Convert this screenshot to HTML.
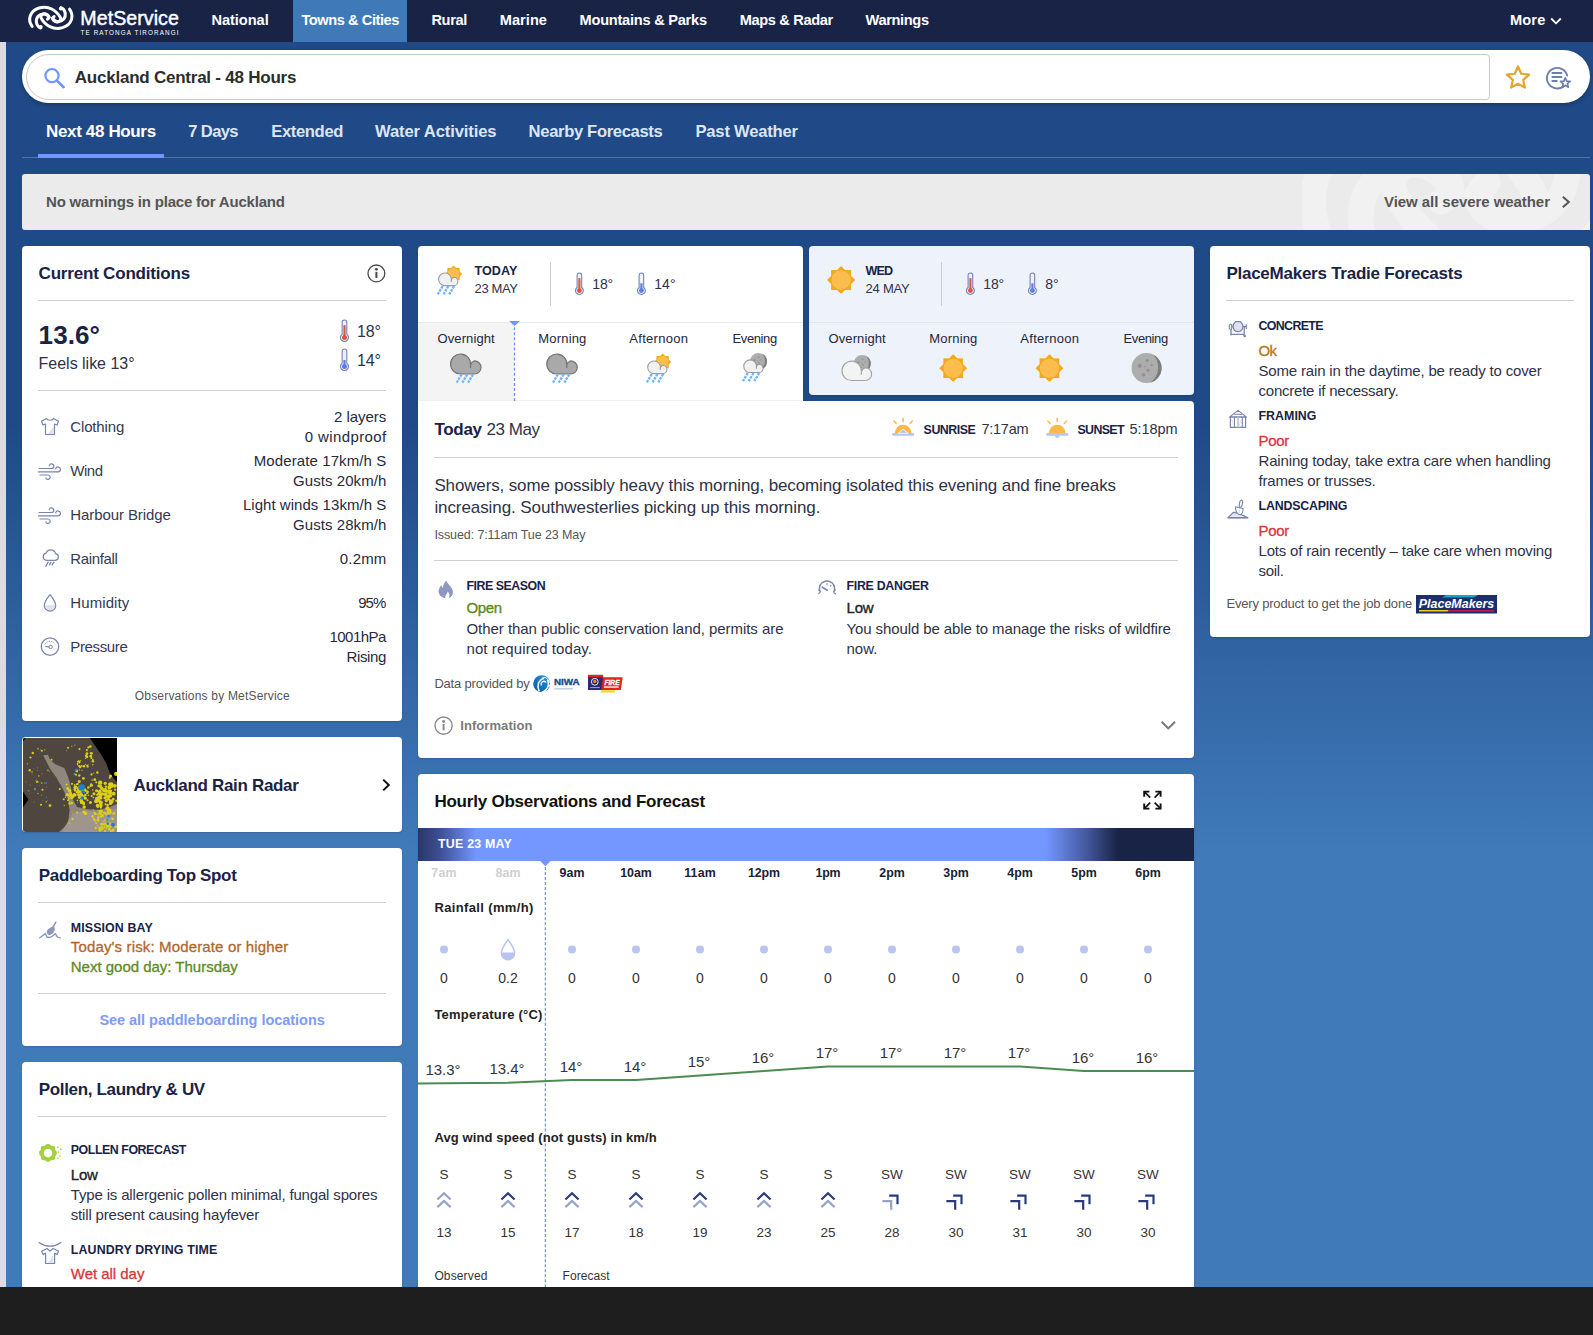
<!DOCTYPE html>
<html lang="en"><head><meta charset="utf-8"><title>MetService - Auckland Central 48 Hours</title>
<style>
html,body{margin:0;padding:0}
body{width:1593px;height:1335px;overflow:hidden;position:relative;background:#1e1e1e;font-family:"Liberation Sans",sans-serif;line-height:1}
#pg{position:absolute;left:0;top:0;width:1593px;height:1335px;overflow:hidden}
#pg>div,#pg>svg,#pg>span{position:absolute;display:block}
#pg>span{white-space:pre}
</style></head>
<body>
<div id="pg">
<div style="left:0px;top:42px;width:6px;height:1245px;background:#d9dce4;"></div>
<div style="left:6px;top:42px;width:1587px;height:1245px;background:linear-gradient(180deg,#1f4a87 0px,#1f4a87 383px,#407ab9 808px,#407ab9 1245px);"></div>
<div style="left:0px;top:0px;width:1593px;height:42px;background:#182346;"></div>
<div style="left:0px;top:1287px;width:1593px;height:48px;background:#1e1e1e;"></div>
<div style="left:293px;top:0px;width:114px;height:42px;background:#4079b8;"></div>
<div style="left:22px;top:49.8px;width:1568px;height:53.7px;background:#fff;border-radius:27px;box-shadow:0 2px 4px rgba(0,0,0,.25)"></div>
<div style="left:26px;top:54px;width:1463px;height:45px;background:#fff;border:1px solid #c9c9c9;border-radius:23px 4px 4px 23px;box-sizing:content-box;width:1462px;height:44px"></div>
<div style="left:22px;top:157px;width:1568px;height:1px;background:rgba(255,255,255,.22);"></div>
<div style="left:38px;top:154px;width:126px;height:4px;background:#7396ff;"></div>
<div style="left:22px;top:174px;width:1568px;height:56px;background:#ebebeb;border-radius:3px;overflow:hidden"></div>
<div style="left:22px;top:246px;width:380px;height:475px;background:#fff;border-radius:4px;box-shadow:0 1px 2px rgba(10,20,60,.18);"></div>
<div style="left:22px;top:737px;width:380px;height:95px;background:#fff;border-radius:4px;box-shadow:0 1px 2px rgba(10,20,60,.18);"></div>
<div style="left:22px;top:848px;width:380px;height:198px;background:#fff;border-radius:4px;box-shadow:0 1px 2px rgba(10,20,60,.18);"></div>
<div style="left:22px;top:1062px;width:380px;height:240px;background:#fff;border-radius:4px;box-shadow:0 1px 2px rgba(10,20,60,.18);"></div>
<div style="left:1210px;top:246px;width:380px;height:391px;background:#fff;border-radius:4px;box-shadow:0 1px 2px rgba(10,20,60,.18);"></div>
<div style="left:418px;top:246px;width:385px;height:160px;background:#fff;border-radius:4px;box-shadow:0 1px 2px rgba(10,20,60,.18);border-radius:4px 4px 0 0"></div>
<div style="left:809px;top:246px;width:385px;height:148.7px;background:#eef2fb;border-radius:4px;box-shadow:0 1px 2px rgba(10,20,60,.18)"></div>
<div style="left:418px;top:401px;width:776px;height:356.7px;background:#fff;border-radius:4px;box-shadow:0 1px 2px rgba(10,20,60,.18);border-radius:0 4px 4px 4px"></div>
<div style="left:418px;top:774px;width:776px;height:530px;background:#fff;border-radius:4px;box-shadow:0 1px 2px rgba(10,20,60,.18);"></div>
<div style="left:38px;top:300px;width:348px;height:1px;background:#cfcfcf;"></div>
<div style="left:38px;top:390px;width:348px;height:1px;background:#cfcfcf;"></div>
<div style="left:38px;top:902px;width:348px;height:1px;background:#cfcfcf;"></div>
<div style="left:38px;top:993px;width:348px;height:1px;background:#cfcfcf;"></div>
<div style="left:38px;top:1116px;width:348px;height:1px;background:#cfcfcf;"></div>
<div style="left:1226px;top:300px;width:348px;height:1px;background:#cfcfcf;"></div>
<div style="left:418px;top:322px;width:96px;height:79px;background:#f4f4f4;"></div>
<div style="left:418px;top:322px;width:385px;height:1px;background:#e9e9e9;"></div>
<div style="left:809px;top:322px;width:385px;height:1px;background:#dfe4ef;"></div>
<div style="left:418px;top:400px;width:385px;height:1px;background:#eeeeee;"></div>
<div style="left:550px;top:262px;width:1px;height:44px;background:#cfcfcf;"></div>
<div style="left:941px;top:262px;width:1px;height:44px;background:#cfcfcf;"></div>
<div style="left:434px;top:457px;width:744px;height:1px;background:#cfcfcf;"></div>
<div style="left:434px;top:560px;width:744px;height:1px;background:#cfcfcf;"></div>
<div style="left:418px;top:828.3px;width:776px;height:32.5px;background:linear-gradient(90deg,#2a3668 0px,#3d4f94 22px,#7396ff 58px,#7396ff 628px,#4a5fa8 664px,#182346 700px,#182346 776px);"></div>
<svg style="left:24px;top:2px;" width="60" height="36" viewBox="0 0 1593 956"><path d="M215,650 C95,480 140,240 400,160 C650,85 860,220 965,410 C1000,480 930,545 850,525 C765,505 730,425 800,385" fill="none" stroke="#fff" stroke-width="80" stroke-linecap="round"/><path d="M440,690 C325,650 290,480 375,380 C450,295 610,290 665,410" fill="none" stroke="#fff" stroke-width="80" stroke-linecap="round"/><path d="M1209,190 C1329,360 1284,600 1024,680 C774,755 564,620 459,430 C424,360 494,295 574,315 C659,335 694,415 624,455" fill="none" stroke="#fff" stroke-width="80" stroke-linecap="round"/><path d="M984,150 C1099,190 1134,360 1049,460 C974,545 814,550 759,430" fill="none" stroke="#fff" stroke-width="80" stroke-linecap="round"/><circle cx="445" cy="665" r="52" fill="#fff"/><circle cx="979" cy="175" r="52" fill="#fff"/></svg>
<svg style="left:1549px;top:16px;" width="14" height="10" viewBox="0 0 14 10"><path d="M2.2,2.5 L7,7.3 L11.8,2.5" fill="none" stroke="#fff" stroke-width="1.8"/></svg>
<svg style="left:42px;top:66px;" width="24" height="23" viewBox="0 0 24 23"><circle cx="10" cy="9.6" r="6.6" fill="none" stroke="#7094ff" stroke-width="2.2"/><path d="M14.8,14.6 L21.6,21.2" stroke="#7094ff" stroke-width="2.6" stroke-linecap="round"/></svg>
<svg style="left:1503px;top:62px;" width="30" height="30" viewBox="0 0 30 30"><polygon points="15.00,4.50 18.23,11.75 26.13,12.58 20.23,17.90 21.88,25.67 15.00,21.70 8.12,25.67 9.77,17.90 3.87,12.58 11.77,11.75" fill="none" stroke="#e5a52a" stroke-width="2.2" stroke-linejoin="round"/></svg>
<svg style="left:1544px;top:64px;" width="30" height="26" viewBox="0 0 30 26"><path d="M20.5,21.5 A10.3,10.3 0 1 1 23.2,11.5" fill="none" stroke="#6d7fae" stroke-width="1.9" stroke-linecap="round"/><path d="M7.6,9 H18.2 M7.6,13 H18.2 M7.6,17 H13.5" stroke="#6d7fae" stroke-width="2"/><polygon points="21.30,13.80 22.65,17.14 26.25,17.39 23.49,19.71 24.36,23.21 21.30,21.30 18.24,23.21 19.11,19.71 16.35,17.39 19.95,17.14" fill="#fff" stroke="#6d7fae" stroke-width="1.6" stroke-linejoin="round"/></svg>
<svg style="left:1302px;top:174px;" width="288" height="56" viewBox="0 0 288 56"><g transform="translate(-30,-95) scale(0.27)"><path d="M215,650 C95,480 140,240 400,160 C650,85 860,220 965,410 C1000,480 930,545 850,525 C765,505 730,425 800,385" fill="none" stroke="#f1f1f1" stroke-width="95" stroke-linecap="round"/><path d="M440,690 C325,650 290,480 375,380 C450,295 610,290 665,410" fill="none" stroke="#f1f1f1" stroke-width="95" stroke-linecap="round"/><path d="M1209,190 C1329,360 1284,600 1024,680 C774,755 564,620 459,430 C424,360 494,295 574,315 C659,335 694,415 624,455" fill="none" stroke="#f1f1f1" stroke-width="95" stroke-linecap="round"/><path d="M984,150 C1099,190 1134,360 1049,460 C974,545 814,550 759,430" fill="none" stroke="#f1f1f1" stroke-width="95" stroke-linecap="round"/><circle cx="445" cy="665" r="52" fill="#f1f1f1"/><circle cx="979" cy="175" r="52" fill="#f1f1f1"/></g></svg>
<svg style="left:1560px;top:195px;" width="12" height="14" viewBox="0 0 12 14"><path d="M2.8,1.8 L8.8,7 L2.8,12.2" fill="none" stroke="#555" stroke-width="2"/></svg>
<svg style="left:338.5px;top:319px;" width="11" height="24" viewBox="0 0 11 24"><g transform="translate(1,1)"><path d="M2.16,2.34 A2.34,2.34 0 0 1 6.84,2.34 V14.26 A4.0,4.0 0 1 1 2.16,14.26 Z" fill="#eef0fa" stroke="#7482b6" stroke-width="1.1"/><path d="M4.5,5.175000000000001 V17.5" stroke="#e0533d" stroke-width="2.15" stroke-linecap="butt"/><circle cx="4.5" cy="17.5" r="2.52" fill="#e0533d"/></g></svg>
<svg style="left:338.5px;top:348px;" width="11" height="24" viewBox="0 0 11 24"><g transform="translate(1,1)"><path d="M2.16,2.34 A2.34,2.34 0 0 1 6.84,2.34 V14.26 A4.0,4.0 0 1 1 2.16,14.26 Z" fill="#eef0fa" stroke="#7482b6" stroke-width="1.1"/><path d="M4.5,10.975 V17.5" stroke="#5b7be8" stroke-width="2.15" stroke-linecap="butt"/><circle cx="4.5" cy="17.5" r="2.52" fill="#5b7be8"/></g></svg>
<svg style="left:573.6px;top:271.7px;" width="10.8" height="24" viewBox="0 0 10.8 24"><g transform="translate(1,1)"><path d="M2.112,2.2880000000000003 A2.2880000000000003,2.2880000000000003 0 0 1 6.688000000000001,2.2880000000000003 V14.432000000000002 A3.9000000000000004,3.9000000000000004 0 1 1 2.112,14.432000000000002 Z" fill="#eef0fa" stroke="#7482b6" stroke-width="1.1"/><path d="M4.4,5.190000000000001 V17.6" stroke="#e0533d" stroke-width="2.10" stroke-linecap="butt"/><circle cx="4.4" cy="17.6" r="2.46" fill="#e0533d"/></g></svg>
<svg style="left:635.6px;top:271.7px;" width="10.8" height="24" viewBox="0 0 10.8 24"><g transform="translate(1,1)"><path d="M2.112,2.2880000000000003 A2.2880000000000003,2.2880000000000003 0 0 1 6.688000000000001,2.2880000000000003 V14.432000000000002 A3.9000000000000004,3.9000000000000004 0 1 1 2.112,14.432000000000002 Z" fill="#eef0fa" stroke="#7482b6" stroke-width="1.1"/><path d="M4.4,10.3 V17.6" stroke="#5b7be8" stroke-width="2.10" stroke-linecap="butt"/><circle cx="4.4" cy="17.6" r="2.46" fill="#5b7be8"/></g></svg>
<svg style="left:964.6px;top:271.7px;" width="10.8" height="24" viewBox="0 0 10.8 24"><g transform="translate(1,1)"><path d="M2.112,2.2880000000000003 A2.2880000000000003,2.2880000000000003 0 0 1 6.688000000000001,2.2880000000000003 V14.432000000000002 A3.9000000000000004,3.9000000000000004 0 1 1 2.112,14.432000000000002 Z" fill="#eef0fa" stroke="#7482b6" stroke-width="1.1"/><path d="M4.4,5.190000000000001 V17.6" stroke="#e0533d" stroke-width="2.10" stroke-linecap="butt"/><circle cx="4.4" cy="17.6" r="2.46" fill="#e0533d"/></g></svg>
<svg style="left:1026.6px;top:271.7px;" width="10.8" height="24" viewBox="0 0 10.8 24"><g transform="translate(1,1)"><path d="M2.112,2.2880000000000003 A2.2880000000000003,2.2880000000000003 0 0 1 6.688000000000001,2.2880000000000003 V14.432000000000002 A3.9000000000000004,3.9000000000000004 0 1 1 2.112,14.432000000000002 Z" fill="#eef0fa" stroke="#7482b6" stroke-width="1.1"/><path d="M4.4,10.3 V17.6" stroke="#5b7be8" stroke-width="2.10" stroke-linecap="butt"/><circle cx="4.4" cy="17.6" r="2.46" fill="#5b7be8"/></g></svg>
<svg style="left:365.6px;top:262.8px;" width="20.8" height="20.8" viewBox="0 0 20.8 20.8"><circle cx="10.4" cy="10.4" r="8.4" fill="none" stroke="#4a4a4a" stroke-width="1.3"/><circle cx="10.4" cy="6.368" r="1.44" fill="#4a4a4a"/><path d="M10.4,8.888 V15.020000000000001" stroke="#4a4a4a" stroke-width="1.98"/></svg>
<svg style="left:433.2px;top:714.6px;" width="21.2" height="21.2" viewBox="0 0 21.2 21.2"><circle cx="10.6" cy="10.6" r="8.6" fill="none" stroke="#8a8a8a" stroke-width="1.4"/><circle cx="10.6" cy="6.4719999999999995" r="1.47" fill="#8a8a8a"/><path d="M10.6,9.052 V15.33" stroke="#8a8a8a" stroke-width="2.02"/></svg>
<svg style="left:40px;top:417px;" width="20" height="19" viewBox="0 0 20 19"><path d="M6.5,1.5 L1.5,4.2 L3,8 L5.5,7 V17.5 H14.5 V7 L17,8 L18.5,4.2 L13.5,1.5 C12.5,3.8 7.5,3.8 6.5,1.5 Z" fill="#fff" stroke="#7a84ad" stroke-width="1.2" stroke-linejoin="round"/><path d="M14,9 V17 H8 Z" fill="#dfe2ee"/></svg>
<svg style="left:38px;top:462.5px;" width="24" height="17" viewBox="0 0 24 17"><path d="M1,5.5 H13.5 A2.3,2.3 0 1 0 11.3,2.6" fill="none" stroke="#7a84ad" stroke-width="1.2" stroke-linecap="round"/><path d="M0.5,8.8 H20 A2.4,2.4 0 1 0 17.7,5.8" fill="none" stroke="#7a84ad" stroke-width="1.2" stroke-linecap="round"/><path d="M2,12 H10 A2.2,2.2 0 1 1 7.9,14.8" fill="none" stroke="#7a84ad" stroke-width="1.2" stroke-linecap="round"/></svg>
<svg style="left:38px;top:506.5px;" width="24" height="17" viewBox="0 0 24 17"><path d="M1,5.5 H13.5 A2.3,2.3 0 1 0 11.3,2.6" fill="none" stroke="#7a84ad" stroke-width="1.2" stroke-linecap="round"/><path d="M0.5,8.8 H20 A2.4,2.4 0 1 0 17.7,5.8" fill="none" stroke="#7a84ad" stroke-width="1.2" stroke-linecap="round"/><path d="M2,12 H10 A2.2,2.2 0 1 1 7.9,14.8" fill="none" stroke="#7a84ad" stroke-width="1.2" stroke-linecap="round"/></svg>
<svg style="left:41px;top:548px;" width="20" height="20" viewBox="0 0 20 20"><path d="M5.5,12.3 A3.6,3.6 0 0 1 5,5.2 A5,5 0 0 1 14.6,5.6 A3.4,3.4 0 0 1 14.5,12.3 Z" fill="#fff" stroke="#7a84ad" stroke-width="1.2"/><path d="M7.4,13.8 L4.6,18.8 M10.2,13.8 L8.2,17.4 M13,13.8 L11,17.4" stroke="#7a84ad" stroke-width="1.3"/></svg>
<svg style="left:42px;top:593px;" width="16" height="20" viewBox="0 0 16 20"><path d="M8,1.6 C8,1.6 2.3,8.6 2.3,12.4 A5.7,5.7 0 0 0 13.7,12.4 C13.7,8.6 8,1.6 8,1.6 Z" fill="#fff" stroke="#7a84ad" stroke-width="1.2"/><path d="M2.9,12.2 H13.1 A5.1,5.1 0 0 1 2.9,12.2 Z" fill="#dfe2ee"/></svg>
<svg style="left:39px;top:636px;" width="22" height="22" viewBox="0 0 22 22"><circle cx="11" cy="10.6" r="8.7" fill="#fff" stroke="#7a84ad" stroke-width="1.3"/><path d="M6,8.3 A5.6,5.6 0 0 1 16,8.3" fill="none" stroke="#7a84ad" stroke-width="1" stroke-dasharray="1.2 1.2"/><circle cx="11.6" cy="11" r="1.7" fill="none" stroke="#7a84ad" stroke-width="1"/><path d="M6.3,10.3 L10,11" stroke="#7a84ad" stroke-width="1.2"/></svg>
<svg style="left:23px;top:738px;border-radius:2px 0 0 3px" width="94" height="94" viewBox="40 40 1252 1252"><defs><filter id="rb" x="-5%" y="-5%" width="110%" height="110%"><feGaussianBlur stdDeviation="7"/></filter></defs><rect x="40" y="40" width="1252" height="1252" fill="#4f463f"/><path d="M930,40 H1292 V625 L1200,520 L1150,380 L1080,260 L1000,140 Z" fill="#000"/><path d="M40,755 L112,860 L40,965 Z" fill="#000"/><path d="M40,40 H80 L40,80 Z" fill="#000"/><g filter="url(#rb)"><path d="M310,270 L372,262 L400,330 L470,390 L590,440 L640,560 L680,700 L700,850 L760,960 L900,990 L1050,1000 L1200,960 L1292,920 V1292 H520 L640,1180 L660,1000 L640,860 L560,700 L480,560 L400,450 L350,350 Z" fill="#8f867e"/><path d="M700,1040 L900,1010 L1100,1030 L1292,980 V1292 H560 Z" fill="#a0958c"/><circle cx="690" cy="832" r="23" fill="#dccf16"/><circle cx="695" cy="818" r="18" fill="#dccf16"/><circle cx="843" cy="911" r="19" fill="#dccf16"/><circle cx="811" cy="743" r="14" fill="#dccf16"/><circle cx="938" cy="898" r="20" fill="#dccf16"/><circle cx="1047" cy="871" r="24" fill="#dccf16"/><circle cx="729" cy="665" r="12" fill="#dccf16"/><circle cx="910" cy="803" r="11" fill="#dccf16"/><circle cx="825" cy="866" r="10" fill="#dccf16"/><circle cx="705" cy="817" r="22" fill="#dccf16"/><circle cx="672" cy="771" r="17" fill="#dccf16"/><circle cx="748" cy="686" r="14" fill="#dccf16"/><circle cx="1097" cy="785" r="22" fill="#dccf16"/><circle cx="779" cy="698" r="13" fill="#dccf16"/><circle cx="792" cy="831" r="21" fill="#dccf16"/><circle cx="659" cy="915" r="15" fill="#dccf16"/><circle cx="968" cy="734" r="10" fill="#dccf16"/><circle cx="849" cy="1024" r="17" fill="#dccf16"/><circle cx="890" cy="776" r="11" fill="#dccf16"/><circle cx="693" cy="651" r="14" fill="#dccf16"/><circle cx="869" cy="841" r="23" fill="#dccf16"/><circle cx="802" cy="735" r="13" fill="#dccf16"/><circle cx="825" cy="813" r="21" fill="#dccf16"/><circle cx="851" cy="917" r="16" fill="#dccf16"/><circle cx="853" cy="956" r="12" fill="#dccf16"/><circle cx="772" cy="747" r="16" fill="#dccf16"/><circle cx="817" cy="875" r="24" fill="#dccf16"/><circle cx="825" cy="702" r="22" fill="#dccf16"/><circle cx="822" cy="897" r="22" fill="#dccf16"/><circle cx="774" cy="751" r="24" fill="#dccf16"/><circle cx="816" cy="873" r="21" fill="#dccf16"/><circle cx="764" cy="871" r="11" fill="#dccf16"/><circle cx="900" cy="868" r="13" fill="#dccf16"/><circle cx="730" cy="727" r="16" fill="#dccf16"/><circle cx="900" cy="758" r="18" fill="#dccf16"/><circle cx="838" cy="738" r="12" fill="#dccf16"/><circle cx="939" cy="680" r="13" fill="#dccf16"/><circle cx="855" cy="958" r="23" fill="#dccf16"/><circle cx="873" cy="1044" r="22" fill="#dccf16"/><circle cx="725" cy="720" r="11" fill="#dccf16"/><circle cx="1024" cy="858" r="13" fill="#dccf16"/><circle cx="780" cy="709" r="22" fill="#dccf16"/><circle cx="738" cy="738" r="12" fill="#dccf16"/><circle cx="794" cy="749" r="13" fill="#dccf16"/><circle cx="636" cy="712" r="19" fill="#dccf16"/><circle cx="762" cy="1031" r="13" fill="#dccf16"/><circle cx="871" cy="799" r="16" fill="#dccf16"/><circle cx="852" cy="815" r="15" fill="#dccf16"/><circle cx="757" cy="764" r="15" fill="#dccf16"/><circle cx="996" cy="595" r="19" fill="#dccf16"/><circle cx="757" cy="654" r="12" fill="#dccf16"/><circle cx="817" cy="795" r="23" fill="#dccf16"/><circle cx="730" cy="521" r="10" fill="#dccf16"/><circle cx="732" cy="695" r="20" fill="#dccf16"/><circle cx="655" cy="1173" r="11" fill="#dccf16"/><circle cx="659" cy="739" r="23" fill="#dccf16"/><circle cx="789" cy="619" r="21" fill="#dccf16"/><circle cx="872" cy="738" r="20" fill="#dccf16"/><circle cx="948" cy="660" r="16" fill="#dccf16"/><circle cx="845" cy="578" r="18" fill="#dccf16"/><circle cx="738" cy="714" r="18" fill="#dccf16"/><circle cx="771" cy="762" r="19" fill="#dccf16"/><circle cx="985" cy="781" r="20" fill="#dccf16"/><circle cx="688" cy="906" r="18" fill="#dccf16"/><circle cx="640" cy="867" r="11" fill="#dccf16"/><circle cx="800" cy="763" r="18" fill="#dccf16"/><circle cx="735" cy="799" r="20" fill="#dccf16"/><circle cx="676" cy="793" r="23" fill="#dccf16"/><circle cx="800" cy="807" r="14" fill="#dccf16"/><circle cx="774" cy="723" r="12" fill="#dccf16"/><circle cx="910" cy="700" r="16" fill="#dccf16"/><circle cx="862" cy="728" r="19" fill="#dccf16"/><circle cx="830" cy="901" r="21" fill="#dccf16"/><circle cx="959" cy="674" r="15" fill="#dccf16"/><circle cx="732" cy="742" r="12" fill="#dccf16"/><circle cx="629" cy="795" r="22" fill="#dccf16"/><circle cx="747" cy="529" r="14" fill="#dccf16"/><circle cx="848" cy="895" r="14" fill="#dccf16"/><circle cx="821" cy="901" r="19" fill="#dccf16"/><circle cx="722" cy="794" r="22" fill="#dccf16"/><circle cx="898" cy="776" r="11" fill="#dccf16"/><circle cx="979" cy="834" r="11" fill="#dccf16"/><circle cx="770" cy="652" r="14" fill="#dccf16"/><circle cx="805" cy="769" r="12" fill="#dccf16"/><circle cx="781" cy="797" r="22" fill="#dccf16"/><circle cx="1153" cy="860" r="13" fill="#dccf16"/><circle cx="1090" cy="713" r="23" fill="#dccf16"/><circle cx="1068" cy="635" r="29" fill="#dccf16"/><circle cx="1129" cy="733" r="21" fill="#dccf16"/><circle cx="1155" cy="815" r="20" fill="#dccf16"/><circle cx="1139" cy="733" r="17" fill="#dccf16"/><circle cx="1080" cy="940" r="21" fill="#dccf16"/><circle cx="1049" cy="678" r="19" fill="#dccf16"/><circle cx="1195" cy="569" r="14" fill="#dccf16"/><circle cx="1267" cy="728" r="14" fill="#dccf16"/><circle cx="1043" cy="844" r="28" fill="#dccf16"/><circle cx="1076" cy="900" r="28" fill="#dccf16"/><circle cx="1206" cy="547" r="20" fill="#dccf16"/><circle cx="1119" cy="739" r="25" fill="#dccf16"/><circle cx="1198" cy="657" r="25" fill="#dccf16"/><circle cx="1189" cy="1030" r="30" fill="#dccf16"/><circle cx="1248" cy="781" r="26" fill="#dccf16"/><circle cx="1075" cy="1018" r="27" fill="#dccf16"/><circle cx="1131" cy="837" r="20" fill="#dccf16"/><circle cx="1020" cy="742" r="21" fill="#dccf16"/><circle cx="1282" cy="877" r="15" fill="#dccf16"/><circle cx="1078" cy="967" r="15" fill="#dccf16"/><circle cx="1207" cy="907" r="25" fill="#dccf16"/><circle cx="1216" cy="658" r="29" fill="#dccf16"/><circle cx="955" cy="813" r="14" fill="#dccf16"/><circle cx="1167" cy="932" r="17" fill="#dccf16"/><circle cx="1135" cy="644" r="21" fill="#dccf16"/><circle cx="1207" cy="683" r="18" fill="#dccf16"/><circle cx="1037" cy="944" r="28" fill="#dccf16"/><circle cx="1190" cy="1007" r="29" fill="#dccf16"/><circle cx="1047" cy="778" r="16" fill="#dccf16"/><circle cx="1058" cy="771" r="23" fill="#dccf16"/><circle cx="1069" cy="789" r="26" fill="#dccf16"/><circle cx="1064" cy="751" r="24" fill="#dccf16"/><circle cx="1241" cy="855" r="19" fill="#dccf16"/><circle cx="1139" cy="924" r="14" fill="#dccf16"/><circle cx="1015" cy="882" r="28" fill="#dccf16"/><circle cx="1081" cy="814" r="15" fill="#dccf16"/><circle cx="1016" cy="631" r="14" fill="#dccf16"/><circle cx="1153" cy="777" r="15" fill="#dccf16"/><circle cx="1167" cy="966" r="18" fill="#dccf16"/><circle cx="1082" cy="921" r="14" fill="#dccf16"/><circle cx="1145" cy="744" r="21" fill="#dccf16"/><circle cx="1150" cy="873" r="22" fill="#dccf16"/><circle cx="1078" cy="841" r="19" fill="#dccf16"/><circle cx="1104" cy="788" r="16" fill="#dccf16"/><circle cx="1073" cy="685" r="22" fill="#dccf16"/><circle cx="1215" cy="678" r="27" fill="#dccf16"/><circle cx="1164" cy="980" r="27" fill="#dccf16"/><circle cx="1207" cy="745" r="18" fill="#dccf16"/><circle cx="1200" cy="764" r="30" fill="#dccf16"/><circle cx="1183" cy="762" r="16" fill="#dccf16"/><circle cx="1141" cy="716" r="14" fill="#dccf16"/><circle cx="1191" cy="700" r="26" fill="#dccf16"/><circle cx="1207" cy="879" r="24" fill="#dccf16"/><circle cx="1203" cy="808" r="24" fill="#dccf16"/><circle cx="1221" cy="887" r="26" fill="#dccf16"/><circle cx="1028" cy="797" r="15" fill="#dccf16"/><circle cx="1184" cy="822" r="13" fill="#dccf16"/><circle cx="1059" cy="758" r="22" fill="#dccf16"/><circle cx="1181" cy="856" r="16" fill="#dccf16"/><circle cx="1281" cy="517" r="29" fill="#dccf16"/><circle cx="1174" cy="822" r="29" fill="#dccf16"/><circle cx="1018" cy="844" r="18" fill="#dccf16"/><circle cx="1056" cy="827" r="20" fill="#dccf16"/><circle cx="1139" cy="789" r="25" fill="#dccf16"/><circle cx="1178" cy="742" r="20" fill="#dccf16"/><circle cx="1145" cy="688" r="16" fill="#dccf16"/><circle cx="1199" cy="914" r="12" fill="#dccf16"/><circle cx="1263" cy="677" r="25" fill="#dccf16"/><circle cx="1222" cy="681" r="19" fill="#dccf16"/><circle cx="892" cy="248" r="18" fill="#dccf16"/><circle cx="953" cy="245" r="17" fill="#dccf16"/><circle cx="937" cy="154" r="16" fill="#dccf16"/><circle cx="852" cy="417" r="17" fill="#dccf16"/><circle cx="911" cy="165" r="15" fill="#dccf16"/><circle cx="874" cy="390" r="8" fill="#dccf16"/><circle cx="909" cy="395" r="7" fill="#dccf16"/><circle cx="896" cy="411" r="14" fill="#dccf16"/><circle cx="953" cy="525" r="14" fill="#dccf16"/><circle cx="902" cy="423" r="13" fill="#dccf16"/><circle cx="891" cy="292" r="18" fill="#dccf16"/><circle cx="891" cy="201" r="15" fill="#dccf16"/><circle cx="951" cy="308" r="14" fill="#dccf16"/><circle cx="937" cy="241" r="11" fill="#dccf16"/><circle cx="971" cy="329" r="11" fill="#dccf16"/><circle cx="971" cy="350" r="17" fill="#dccf16"/><circle cx="883" cy="277" r="18" fill="#dccf16"/><circle cx="792" cy="188" r="14" fill="#dccf16"/><circle cx="947" cy="277" r="14" fill="#dccf16"/><circle cx="941" cy="283" r="17" fill="#dccf16"/><circle cx="970" cy="396" r="9" fill="#dccf16"/><circle cx="871" cy="313" r="8" fill="#dccf16"/><circle cx="820" cy="412" r="12" fill="#dccf16"/><circle cx="767" cy="396" r="10" fill="#dccf16"/><circle cx="768" cy="355" r="10" fill="#dccf16"/><circle cx="785" cy="374" r="7" fill="#dccf16"/><circle cx="790" cy="464" r="8" fill="#dccf16"/><circle cx="791" cy="360" r="15" fill="#dccf16"/><circle cx="790" cy="414" r="16" fill="#dccf16"/><circle cx="801" cy="429" r="15" fill="#dccf16"/><circle cx="759" cy="479" r="16" fill="#dccf16"/><circle cx="791" cy="537" r="15" fill="#dccf16"/><circle cx="784" cy="351" r="16" fill="#dccf16"/><circle cx="807" cy="341" r="8" fill="#dccf16"/><circle cx="766" cy="378" r="9" fill="#dccf16"/><circle cx="825" cy="471" r="8" fill="#dccf16"/><circle cx="748" cy="482" r="11" fill="#dccf16"/><circle cx="787" cy="545" r="11" fill="#dccf16"/><circle cx="1169" cy="1063" r="20" fill="#dccf16"/><circle cx="1153" cy="1199" r="19" fill="#dccf16"/><circle cx="1177" cy="1051" r="12" fill="#dccf16"/><circle cx="1132" cy="1280" r="15" fill="#dccf16"/><circle cx="1043" cy="1098" r="17" fill="#dccf16"/><circle cx="1175" cy="1216" r="20" fill="#dccf16"/><circle cx="1181" cy="1167" r="11" fill="#dccf16"/><circle cx="1038" cy="1211" r="9" fill="#dccf16"/><circle cx="1116" cy="1152" r="9" fill="#dccf16"/><circle cx="1099" cy="1069" r="16" fill="#dccf16"/><circle cx="1078" cy="1225" r="11" fill="#dccf16"/><circle cx="1067" cy="1270" r="18" fill="#dccf16"/><circle cx="1191" cy="1178" r="18" fill="#dccf16"/><circle cx="1040" cy="1064" r="11" fill="#dccf16"/><circle cx="1088" cy="1188" r="18" fill="#dccf16"/><circle cx="1061" cy="1245" r="20" fill="#dccf16"/><circle cx="1098" cy="1250" r="17" fill="#dccf16"/><circle cx="1234" cy="1120" r="12" fill="#dccf16"/><circle cx="1183" cy="1176" r="15" fill="#dccf16"/><circle cx="1014" cy="1172" r="12" fill="#dccf16"/><circle cx="1156" cy="1129" r="11" fill="#dccf16"/><circle cx="1131" cy="1132" r="12" fill="#dccf16"/><circle cx="1128" cy="1038" r="11" fill="#dccf16"/><circle cx="1203" cy="1219" r="17" fill="#dccf16"/><circle cx="1120" cy="1190" r="17" fill="#dccf16"/><circle cx="967" cy="1084" r="19" fill="#dccf16"/><circle cx="1233" cy="1116" r="18" fill="#dccf16"/><circle cx="1123" cy="1226" r="13" fill="#dccf16"/><circle cx="1151" cy="1236" r="12" fill="#dccf16"/><circle cx="1091" cy="1221" r="13" fill="#dccf16"/><circle cx="1189" cy="1257" r="18" fill="#dccf16"/><circle cx="984" cy="1122" r="15" fill="#dccf16"/><circle cx="1218" cy="1281" r="19" fill="#dccf16"/><circle cx="1146" cy="1177" r="14" fill="#dccf16"/><circle cx="1038" cy="1132" r="20" fill="#dccf16"/><circle cx="1055" cy="1042" r="9" fill="#dccf16"/><circle cx="998" cy="1119" r="9" fill="#dccf16"/><circle cx="1278" cy="1224" r="19" fill="#dccf16"/><circle cx="1260" cy="1218" r="10" fill="#dccf16"/><circle cx="1147" cy="1044" r="11" fill="#dccf16"/><circle cx="998" cy="1142" r="13" fill="#dccf16"/><circle cx="1101" cy="1078" r="14" fill="#dccf16"/><circle cx="1124" cy="1037" r="19" fill="#dccf16"/><circle cx="1007" cy="1240" r="16" fill="#dccf16"/><circle cx="1249" cy="1045" r="18" fill="#dccf16"/><circle cx="1080" cy="1085" r="17" fill="#dccf16"/><circle cx="1180" cy="1081" r="13" fill="#dccf16"/><circle cx="1240" cy="1265" r="20" fill="#dccf16"/><circle cx="1026" cy="1053" r="9" fill="#dccf16"/><circle cx="1001" cy="1051" r="16" fill="#dccf16"/><circle cx="1124" cy="1049" r="8" fill="#dccf16"/><circle cx="977" cy="998" r="9" fill="#dccf16"/><circle cx="1142" cy="1053" r="12" fill="#dccf16"/><circle cx="1078" cy="1036" r="8" fill="#dccf16"/><circle cx="1082" cy="1059" r="9" fill="#dccf16"/><circle cx="1038" cy="1001" r="9" fill="#dccf16"/><circle cx="1086" cy="1062" r="9" fill="#dccf16"/><circle cx="1063" cy="1014" r="12" fill="#dccf16"/><circle cx="1097" cy="1009" r="9" fill="#dccf16"/><circle cx="1195" cy="997" r="10" fill="#dccf16"/><circle cx="868" cy="1018" r="11" fill="#dccf16"/><circle cx="1065" cy="1049" r="16" fill="#dccf16"/><circle cx="1085" cy="1012" r="12" fill="#dccf16"/><circle cx="996" cy="1038" r="16" fill="#dccf16"/><circle cx="604" cy="832" r="8" fill="#dccf16"/><circle cx="582" cy="855" r="14" fill="#dccf16"/><circle cx="608" cy="810" r="9" fill="#dccf16"/><circle cx="639" cy="872" r="10" fill="#dccf16"/><circle cx="653" cy="824" r="13" fill="#dccf16"/><circle cx="651" cy="849" r="12" fill="#dccf16"/><circle cx="660" cy="892" r="8" fill="#dccf16"/><circle cx="654" cy="798" r="15" fill="#dccf16"/><circle cx="140" cy="300" r="14" fill="#dccf16"/><circle cx="170" cy="240" r="16" fill="#dccf16"/><circle cx="290" cy="210" r="14" fill="#dccf16"/><circle cx="240" cy="182" r="12" fill="#a89e28"/><circle cx="100" cy="384" r="10" fill="#a89e28"/><circle cx="130" cy="470" r="16" fill="#dccf16"/><circle cx="160" cy="490" r="12" fill="#a89e28"/><circle cx="250" cy="545" r="12" fill="#a89e28"/><circle cx="230" cy="625" r="16" fill="#dccf16"/><circle cx="290" cy="640" r="12" fill="#a89e28"/><circle cx="300" cy="730" r="14" fill="#dccf16"/><circle cx="240" cy="780" r="10" fill="#a89e28"/><circle cx="350" cy="890" r="12" fill="#a89e28"/><circle cx="400" cy="940" r="18" fill="#dccf16"/><circle cx="280" cy="930" r="14" fill="#dccf16"/><circle cx="530" cy="720" r="14" fill="#dccf16"/><circle cx="620" cy="660" r="14" fill="#dccf16"/><circle cx="420" cy="330" r="14" fill="#dccf16"/><circle cx="400" cy="390" r="12" fill="#a89e28"/><circle cx="370" cy="470" r="12" fill="#a89e28"/><circle cx="640" cy="170" r="14" fill="#dccf16"/><circle cx="690" cy="150" r="10" fill="#a89e28"/><circle cx="730" cy="135" r="10" fill="#a89e28"/><circle cx="620" cy="210" r="8" fill="#a89e28"/><circle cx="1030" cy="500" r="16" fill="#dccf16"/><circle cx="980" cy="510" r="10" fill="#a89e28"/><circle cx="960" cy="600" r="12" fill="#a89e28"/><circle cx="700" cy="1120" r="16" fill="#dccf16"/><circle cx="690" cy="1020" r="12" fill="#a89e28"/><circle cx="590" cy="940" r="10" fill="#a89e28"/><circle cx="330" cy="200" r="10" fill="#a89e28"/><circle cx="326" cy="639" r="9" fill="#8d8430"/><circle cx="353" cy="691" r="7" fill="#8d8430"/><circle cx="391" cy="487" r="9" fill="#8d8430"/><circle cx="186" cy="893" r="7" fill="#8d8430"/><circle cx="292" cy="516" r="9" fill="#8d8430"/><circle cx="286" cy="802" r="8" fill="#8d8430"/><circle cx="364" cy="876" r="7" fill="#8d8430"/><circle cx="234" cy="634" r="7" fill="#8d8430"/><circle cx="79" cy="625" r="7" fill="#8d8430"/><circle cx="230" cy="473" r="7" fill="#8d8430"/><circle cx="327" cy="304" r="5" fill="#8d8430"/><circle cx="126" cy="780" r="6" fill="#8d8430"/><circle cx="138" cy="473" r="5" fill="#8d8430"/><circle cx="447" cy="541" r="6" fill="#8d8430"/><circle cx="182" cy="450" r="7" fill="#8d8430"/><circle cx="160" cy="518" r="7" fill="#8d8430"/><circle cx="123" cy="746" r="6" fill="#8d8430"/><circle cx="305" cy="868" r="7" fill="#8d8430"/><circle cx="383" cy="473" r="9" fill="#8d8430"/><circle cx="149" cy="886" r="5" fill="#8d8430"/><circle cx="281" cy="629" r="8" fill="#8d8430"/><circle cx="232" cy="438" r="7" fill="#8d8430"/><circle cx="327" cy="331" r="5" fill="#8d8430"/><circle cx="259" cy="676" r="6" fill="#8d8430"/><circle cx="214" cy="603" r="10" fill="#8d8430"/><circle cx="132" cy="666" r="8" fill="#8d8430"/><circle cx="272" cy="191" r="7" fill="#8d8430"/><circle cx="194" cy="740" r="5" fill="#8d8430"/><circle cx="111" cy="741" r="10" fill="#8d8430"/><circle cx="820" cy="700" r="44" fill="#1f7fe0"/><circle cx="850" cy="760" r="20" fill="#1f7fe0"/><circle cx="830" cy="840" r="24" fill="#1f7fe0"/><circle cx="750" cy="460" r="15" fill="#1f7fe0"/><circle cx="720" cy="520" r="12" fill="#1f7fe0"/><circle cx="350" cy="640" r="13" fill="#1f7fe0"/><circle cx="350" cy="830" r="9" fill="#1f7fe0"/><circle cx="1180" cy="1080" r="20" fill="#1f7fe0"/><circle cx="1240" cy="1195" r="26" fill="#1f7fe0"/><circle cx="1170" cy="1180" r="18" fill="#1f7fe0"/><circle cx="1160" cy="1130" r="12" fill="#1f7fe0"/><circle cx="770" cy="900" r="10" fill="#1f7fe0"/><circle cx="900" cy="720" r="8" fill="#1f7fe0"/><circle cx="200" cy="720" r="16" fill="#5a8a94"/></g></svg>
<svg style="left:380px;top:777px;" width="12" height="16" viewBox="0 0 12 16"><path d="M3.2,2.6 L8.8,8 L3.2,13.4" fill="none" stroke="#111" stroke-width="2"/></svg>
<svg style="left:39px;top:921px;" width="23" height="20" viewBox="0 0 23 20"><path d="M16.8,1.2 L13.4,7.4" stroke="#8d98bb" stroke-width="1.5" stroke-linecap="round"/><path d="M14.9,4.6 C12,6.6 8.2,8 7.8,10.8 C7.6,12.4 8.8,14 10.6,14 C13.2,13.5 15.8,11.4 15.7,8 C15.7,6.8 15.4,5.6 14.9,4.6 Z" fill="#8d98bb"/><path d="M0.8,16.7 L6.4,12.6 L8,16 C10,17 12,16.2 13.2,15.2 L16.4,12.6 L18.2,15.8 C19.2,16.6 20,16.8 21.2,16.9" fill="none" stroke="#8d98bb" stroke-width="1.4" stroke-linecap="round" stroke-linejoin="round"/></svg>
<svg style="left:38.5px;top:1143.5px;" width="24" height="18" viewBox="0 0 24 18"><circle cx="14.60" cy="9.00" r="3.3" fill="#a5d13f"/><circle cx="12.96" cy="12.96" r="3.3" fill="#a5d13f"/><circle cx="9.00" cy="14.60" r="3.3" fill="#a5d13f"/><circle cx="5.04" cy="12.96" r="3.3" fill="#a5d13f"/><circle cx="3.40" cy="9.00" r="3.3" fill="#a5d13f"/><circle cx="5.04" cy="5.04" r="3.3" fill="#a5d13f"/><circle cx="9.00" cy="3.40" r="3.3" fill="#a5d13f"/><circle cx="12.96" cy="5.04" r="3.3" fill="#a5d13f"/><circle cx="9" cy="9" r="6" fill="#a5d13f"/><circle cx="9" cy="9" r="4.3" fill="#fff"/><circle cx="18.8" cy="3" r=".85" fill="#a5d13f"/><circle cx="21.9" cy="5.2" r=".85" fill="#a5d13f"/><circle cx="19.5" cy="8.1" r=".85" fill="#a5d13f"/><circle cx="21" cy="12" r=".85" fill="#a5d13f"/><circle cx="18.9" cy="14.2" r=".85" fill="#a5d13f"/></svg>
<svg style="left:38px;top:1241px;" width="24" height="24" viewBox="0 0 24 24"><path d="M1,1.4 C8,6.2 16,6.2 23,1.4" fill="none" stroke="#7a84ad" stroke-width="1.2" stroke-linecap="round"/><path d="M9,7.5 L3.6,10.2 L5.2,13.4 L7.6,12.4 V22.5 H16.6 V12.4 L19,13.4 L20.6,10.2 L15.2,7.5 L12,10 Z" fill="#fff" stroke="#7a84ad" stroke-width="1.2" stroke-linejoin="round"/><path d="M15.4,13.5 V22 H10 Z" fill="#dfe2ee"/></svg>
<svg style="left:1228px;top:320px;" width="20" height="18" viewBox="0 0 20 18"><path d="M3,9.2 V15.6 M3,14.3 H16.2 M16.2,7 V15.8" fill="none" stroke="#7a84ad" stroke-width="1.3"/><path d="M7.6,1.7 H12.4 C14.2,3 14.9,5 14.9,6.6 C14.9,9.6 12.8,11.6 10,11.6 C7.2,11.6 5.1,9.6 5.1,6.6 C5.1,5 5.8,3 7.6,1.7 Z" fill="#dfe2ee" stroke="#7a84ad" stroke-width="1.2"/><rect x="1.3" y="4.2" width="2.4" height="5" rx="1" fill="#fff" stroke="#7a84ad" stroke-width="1.1"/><path d="M3.7,6.6 H5.1 M14.9,6.6 H18.4 M18.3,4.2 V9" stroke="#7a84ad" stroke-width="1.2"/><path d="M15.2,15.6 L17.2,14.6 L18.2,16.4 L16.2,17.4 Z" fill="#7a84ad"/></svg>
<svg style="left:1228px;top:409px;" width="20" height="20" viewBox="0 0 20 20"><path d="M1.5,8.1 L10,1.4 L18.5,8.1 Z" fill="#fff" stroke="#7a84ad" stroke-width="1.2" stroke-linejoin="round"/><path d="M6,5.3 H14" stroke="#7a84ad" stroke-width="1"/><path d="M2.4,8.1 H17.6 V18.4 H2.4 Z" fill="#fff" stroke="#7a84ad" stroke-width="1.2" stroke-linejoin="round"/><path d="M6.5,8.1 V18.4 M14.3,8.1 V18.4" stroke="#7a84ad" stroke-width="1.1"/><path d="M10,8.1 V18.4" stroke="#b9bfd8" stroke-width="1.6"/><path d="M3.5,10 L6,17 M13.6,10 L11,17" stroke="#d5d9e8" stroke-width=".8"/></svg>
<svg style="left:1227px;top:499px;" width="22" height="20" viewBox="0 0 22 20"><path d="M1.2,18.6 L6.2,13.3 C10,13.2 15,15.6 20.6,18.6 Z" fill="#e3e6f0" stroke="#7a84ad" stroke-width="1.2" stroke-linejoin="round"/><path d="M1.2,18.7 H20.6" stroke="#7a84ad" stroke-width="1.6" stroke-linecap="round"/><path d="M8.6,7.8 L16,9.5 C16.2,12.6 14.8,15.4 12.8,15.7 C10.4,15.2 8.2,12.2 8.6,7.8 Z" fill="#fff" stroke="#7a84ad" stroke-width="1.1" stroke-linejoin="round"/><ellipse cx="13.9" cy="4.6" rx="1.5" ry="3.7" transform="rotate(11 13.9 4.6)" fill="#fff" stroke="#7a84ad" stroke-width="1.1"/><path d="M12.2,11 L12.4,13.6" stroke="#d5d9e8" stroke-width=".9"/></svg>
<svg style="left:1416px;top:595px;" width="81" height="18.5" viewBox="0 0 81 18.5"><rect width="81" height="18.5" fill="#1b2e6d"/><path d="M30,0 H62 L58,2.6 H26 Z" fill="#19a3c7"/><path d="M3,15 H33 L31.5,16.6 H3 Z" fill="#f2d11b"/><path d="M33,15 H78 V16.6 H31.5 Z" fill="#c8184a"/><text x="2.8" y="13.4" font-family="Liberation Sans, sans-serif" font-size="13.6" font-weight="700" font-style="italic" fill="#fff" textLength="75.5" lengthAdjust="spacingAndGlyphs">PlaceMakers</text></svg>
<svg style="left:0;top:0" width="1593" height="1335" viewBox="0 0 1593 1335"><rect x="447.42" y="267.92" width="12.16" height="12.16" fill="#f2a91e"/><rect x="447.42" y="267.92" width="12.16" height="12.16" fill="#f2a91e" transform="rotate(45 453.5 274.0)"/><circle cx="453.5" cy="274.0" r="5.90" fill="#fdbd4e"/><path d="M445.23,285.66 H453.72 A4.18,4.18 0 0 0 453.72,277.30 A4.18,4.18 0 0 0 451.25,280.01 A6.33,6.33 0 1 0 445.23,285.66 Z" fill="#f0f2f2" stroke="#9d9d9d" stroke-width="1.1" stroke-linejoin="round"/><path d="M451.25,280.01 V281.89" stroke="#9d9d9d" stroke-width="1.1" fill="none"/><path d="M454.10,286.00 L449.20,294.30" stroke="#6eb5ff" stroke-width="2.30" stroke-dasharray="2.70 0.90"/><path d="M448.40,286.00 L443.50,294.30" stroke="#6eb5ff" stroke-width="2.30" stroke-dasharray="2.70 0.90"/><path d="M442.70,286.00 L437.80,294.30" stroke="#6eb5ff" stroke-width="2.30" stroke-dasharray="2.70 0.90"/><path d="M461.00,374.00 H474.40 A6.60,6.60 0 0 0 474.40,360.80 A6.60,6.60 0 0 0 470.50,365.09 A10.00,10.00 0 1 0 461.00,374.00 Z" fill="#a9a9a9" stroke="#757575" stroke-width="1.2" stroke-linejoin="round"/><path d="M470.50,365.09 V368.06" stroke="#757575" stroke-width="1.2" fill="none"/><path d="M473.00,374.30 L468.10,382.60" stroke="#6eb5ff" stroke-width="2.30" stroke-dasharray="2.70 0.90"/><path d="M467.30,374.30 L462.40,382.60" stroke="#6eb5ff" stroke-width="2.30" stroke-dasharray="2.70 0.90"/><path d="M461.60,374.30 L456.70,382.60" stroke="#6eb5ff" stroke-width="2.30" stroke-dasharray="2.70 0.90"/><path d="M557.25,374.00 H570.65 A6.60,6.60 0 0 0 570.65,360.80 A6.60,6.60 0 0 0 566.75,365.09 A10.00,10.00 0 1 0 557.25,374.00 Z" fill="#a9a9a9" stroke="#757575" stroke-width="1.2" stroke-linejoin="round"/><path d="M566.75,365.09 V368.06" stroke="#757575" stroke-width="1.2" fill="none"/><path d="M569.25,374.30 L564.35,382.60" stroke="#6eb5ff" stroke-width="2.30" stroke-dasharray="2.70 0.90"/><path d="M563.55,374.30 L558.65,382.60" stroke="#6eb5ff" stroke-width="2.30" stroke-dasharray="2.70 0.90"/><path d="M557.85,374.30 L552.95,382.60" stroke="#6eb5ff" stroke-width="2.30" stroke-dasharray="2.70 0.90"/><rect x="656.52" y="355.92" width="12.16" height="12.16" fill="#f2a91e"/><rect x="656.52" y="355.92" width="12.16" height="12.16" fill="#f2a91e" transform="rotate(45 662.6 362.0)"/><circle cx="662.6" cy="362.0" r="5.90" fill="#fdbd4e"/><path d="M654.33,373.66 H662.82 A4.18,4.18 0 0 0 662.82,365.30 A4.18,4.18 0 0 0 660.35,368.01 A6.33,6.33 0 1 0 654.33,373.66 Z" fill="#f0f2f2" stroke="#9d9d9d" stroke-width="1.1" stroke-linejoin="round"/><path d="M660.35,368.01 V369.89" stroke="#9d9d9d" stroke-width="1.1" fill="none"/><path d="M663.20,374.00 L658.30,382.30" stroke="#6eb5ff" stroke-width="2.30" stroke-dasharray="2.70 0.90"/><path d="M657.50,374.00 L652.60,382.30" stroke="#6eb5ff" stroke-width="2.30" stroke-dasharray="2.70 0.90"/><path d="M651.80,374.00 L646.90,382.30" stroke="#6eb5ff" stroke-width="2.30" stroke-dasharray="2.70 0.90"/><circle cx="758.4" cy="361.4" r="8.5" fill="#adadad"/><path d="M762.23,353.75 A8.5,8.5 0 0 1 760.52,369.64 A10.62,10.62 0 0 0 762.23,353.75 Z" fill="#7c7c7c"/><circle cx="754.57" cy="360.12" r="1.19" fill="#919191"/><circle cx="758.82" cy="357.15" r="0.85" fill="#919191"/><circle cx="759.25" cy="362.67" r="0.85" fill="#919191"/><circle cx="756.70" cy="365.22" r="1.02" fill="#919191"/><circle cx="761.38" cy="359.70" r="0.68" fill="#919191"/><circle cx="757.55" cy="360.55" r="0.51" fill="#919191"/><path d="M750.33,372.56 H758.82 A4.18,4.18 0 0 0 758.82,364.20 A4.18,4.18 0 0 0 756.35,366.91 A6.33,6.33 0 1 0 750.33,372.56 Z" fill="#f0f2f2" stroke="#9d9d9d" stroke-width="1.1" stroke-linejoin="round"/><path d="M756.35,366.91 V368.79" stroke="#9d9d9d" stroke-width="1.1" fill="none"/><path d="M759.20,372.90 L754.30,381.20" stroke="#6eb5ff" stroke-width="2.30" stroke-dasharray="2.70 0.90"/><path d="M753.50,372.90 L748.60,381.20" stroke="#6eb5ff" stroke-width="2.30" stroke-dasharray="2.70 0.90"/><path d="M747.80,372.90 L742.90,381.20" stroke="#6eb5ff" stroke-width="2.30" stroke-dasharray="2.70 0.90"/><rect x="831.13" y="270.03" width="19.94" height="19.94" fill="#f2a91e"/><rect x="831.13" y="270.03" width="19.94" height="19.94" fill="#f2a91e" transform="rotate(45 841.1 280)"/><circle cx="841.1" cy="280" r="9.67" fill="#fdbd4e"/><circle cx="862.2" cy="363.6" r="8.5" fill="#adadad"/><path d="M866.03,355.95 A8.5,8.5 0 0 1 864.33,371.85 A10.62,10.62 0 0 0 866.03,355.95 Z" fill="#7c7c7c"/><circle cx="858.38" cy="362.33" r="1.19" fill="#919191"/><circle cx="862.62" cy="359.35" r="0.85" fill="#919191"/><circle cx="863.05" cy="364.88" r="0.85" fill="#919191"/><circle cx="860.50" cy="367.43" r="1.02" fill="#919191"/><circle cx="865.18" cy="361.90" r="0.68" fill="#919191"/><circle cx="861.35" cy="362.75" r="0.51" fill="#919191"/><path d="M852.13,380.56 H865.18 A6.42,6.42 0 0 0 865.18,367.71 A6.42,6.42 0 0 0 861.38,371.89 A9.73,9.73 0 1 0 852.13,380.56 Z" fill="#f2f3f3" stroke="#a3a3a3" stroke-width="1.1" stroke-linejoin="round"/><path d="M861.38,371.89 V374.78" stroke="#a3a3a3" stroke-width="1.1" fill="none"/><rect x="943.37" y="358.37" width="19.66" height="19.66" fill="#f2a91e"/><rect x="943.37" y="358.37" width="19.66" height="19.66" fill="#f2a91e" transform="rotate(45 953.2 368.2)"/><circle cx="953.2" cy="368.2" r="9.53" fill="#fdbd4e"/><rect x="1039.62" y="358.37" width="19.66" height="19.66" fill="#f2a91e"/><rect x="1039.62" y="358.37" width="19.66" height="19.66" fill="#f2a91e" transform="rotate(45 1049.45 368.2)"/><circle cx="1049.45" cy="368.2" r="9.53" fill="#fdbd4e"/><circle cx="1146.5" cy="368.1" r="15" fill="#adadad"/><path d="M1153.25,354.60 A15,15 0 0 1 1150.25,382.65 A18.75,18.75 0 0 0 1153.25,354.60 Z" fill="#7c7c7c"/><circle cx="1139.75" cy="365.85" r="2.10" fill="#919191"/><circle cx="1147.25" cy="360.60" r="1.50" fill="#919191"/><circle cx="1148.00" cy="370.35" r="1.50" fill="#919191"/><circle cx="1143.50" cy="374.85" r="1.80" fill="#919191"/><circle cx="1151.75" cy="365.10" r="1.20" fill="#919191"/><circle cx="1145.00" cy="366.60" r="0.90" fill="#919191"/><path d="M509.1,321 H519.9 L514.5,326 Z" fill="#7094ff"/><path d="M514.5,327.2 V401" stroke="#7094ff" stroke-width="1.3" stroke-dasharray="3 2.07"/><path d="M894.8000000000001,433 A8.3,8.3 0 0 1 911.4,433 Z" fill="#fdb94a"/><path d="M903.1,418.2 V421.8 M893.8000000000001,421 L896.1,423.4 M912.4,421 L910.1,423.4" stroke="#fdb94a" stroke-width="1.5" stroke-linecap="round"/><rect x="892.1" y="433" width="22" height="2.7" rx="1" fill="#b9c4f0"/><path d="M898.1,433.3 L903.1,429.2 L908.1,433.3 Z" fill="#b9c4f0" stroke="#fff" stroke-width=".8"/><path d="M1048.9,433 A8.3,8.3 0 0 1 1065.5,433 Z" fill="#fdb94a"/><path d="M1057.2,418.2 V421.8 M1047.9,421 L1050.2,423.4 M1066.5,421 L1064.2,423.4" stroke="#fdb94a" stroke-width="1.5" stroke-linecap="round"/><rect x="1046.2" y="433" width="22" height="2.7" rx="1" fill="#b9c4f0"/><path d="M1053.8,435.5 L1057.2,438.6 L1060.6000000000001,435.5 Z" fill="#b9c4f0"/><path d="M446.2,580.4 C447.5,584 451.5,586 452.6,590.2 C453.6,594 451.8,597.2 448.6,598.2 C450.2,596 449.6,593.4 447.6,591.6 C447.4,593.8 446,594.6 445.4,596 C445,597 445.3,597.8 445.8,598.3 C441.4,597.8 438.2,594.6 438.6,590.6 C438.9,588.2 440.4,586.6 441.2,585 C441.6,586.4 442.2,587.4 443,588 C443,584.6 444.6,582.4 446.2,580.4 Z" fill="#8e98c0"/><path d="M820.5,592.5 A7.6,7.6 0 1 1 833.5,592.5" fill="none" stroke="#7a84ad" stroke-width="1.5"/><path d="M822.3,587.2 L827.3,590.2" stroke="#7a84ad" stroke-width="1.6" stroke-linecap="round"/><path d="M827,583.2 V584.8 M831.3,585.2 L830.3,586.3 M818,590 H819.5 M834.5,590 H836 M833.8,592.6 L835.8,594.2 M820.2,592.6 L818.4,593.8" stroke="#7a84ad" stroke-width="1.2"/><defs><linearGradient id="ng" x1="0" y1="1" x2="1" y2="0"><stop offset="0" stop-color="#0b58a2"/><stop offset="1" stop-color="#2a96da"/></linearGradient></defs><circle cx="541.7" cy="683.7" r="8.5" fill="url(#ng)"/><path d="M539,690.6 C536.6,685.6 538.6,680 543.6,678.4" fill="none" stroke="#fff" stroke-width="1.5" stroke-linecap="round"/><path d="M541.2,685 C540.6,682 543.6,680.2 545.8,682" fill="none" stroke="#fff" stroke-width="1.3" stroke-linecap="round"/><path d="M542.4,677.4 C546,676.8 549,679.4 549.4,682.6" fill="none" stroke="#fff" stroke-width=".9"/><path d="M547.6,680.4 C549,683.4 548.4,687.4 545.6,690 C544.6,691 543.4,691.8 542,692.2" fill="none" stroke="#fff" stroke-width="1.4" stroke-linecap="round"/><path d="M548.4,683.4 L551,686.6 L548.8,686.4 Z" fill="#fff"/><text x="554" y="685.4" font-family="Liberation Sans, sans-serif" font-size="9.4" font-weight="700" fill="#15508f" stroke="#15508f" stroke-width=".4" textLength="25.6" lengthAdjust="spacingAndGlyphs">NIWA</text><rect x="554.3" y="688" width="18.5" height="1.6" fill="#c3d0e2"/><path d="M588,674.9 H603 V690 H588 Z" fill="#2a2775"/><path d="M588,674.9 H603.2 V677.3 H588 Z" fill="#e2231a"/><path d="M603,677.3 H622.7 L620.8,690 H601.2 Z" fill="#e2231a"/><circle cx="594.8" cy="681.8" r="3.4" fill="none" stroke="#e8e8f4" stroke-width="1"/><circle cx="594.8" cy="681.4" r="1.7" fill="#e58a2e"/><rect x="590.2" y="687" width="9.6" height="1.1" fill="#9a98cc"/><text x="604.4" y="685" font-family="Liberation Sans, sans-serif" font-size="7" font-weight="700" font-style="italic" fill="#fff" stroke="#fff" stroke-width=".3" textLength="15.2" lengthAdjust="spacingAndGlyphs">FIRE</text><rect x="604" y="686.2" width="14.6" height="1.7" fill="#f9d3d0"/><path d="M601.2,690.2 H615.1 L614.8,692.5 H600.9 Z" fill="#f7dc14"/><path d="M1161.6,721.8 L1168.3,728.4 L1175,721.8" fill="none" stroke="#777" stroke-width="2"/><path d="M1150.2,797.6 L1144.2,791.6" stroke="#111" stroke-width="1.7"/><path d="M1149.4,791.6 H1144.2 V796.8000000000001" fill="none" stroke="#111" stroke-width="1.9"/><path d="M1154.6,797.6 L1160.6,791.6" stroke="#111" stroke-width="1.7"/><path d="M1155.3999999999999,791.6 H1160.6 V796.8000000000001" fill="none" stroke="#111" stroke-width="1.9"/><path d="M1150.2,802.6 L1144.2,808.6" stroke="#111" stroke-width="1.7"/><path d="M1149.4,808.6 H1144.2 V803.4" fill="none" stroke="#111" stroke-width="1.9"/><path d="M1154.6,802.6 L1160.6,808.6" stroke="#111" stroke-width="1.7"/><path d="M1155.3999999999999,808.6 H1160.6 V803.4" fill="none" stroke="#111" stroke-width="1.9"/><path d="M539.7,860.5 H551.1 L545.4,866.2 Z" fill="#7396ff"/><path d="M545.4,866.9 V1287" stroke="#7094ff" stroke-width="1.3" stroke-dasharray="3 2.03"/><circle cx="444" cy="949.4" r="4" fill="#b9c4f0"/><path d="M508,939.6 C508,939.6 501.4,948.6 501.4,953 A6.6,6.6 0 0 0 514.6,953 C514.6,948.6 508,939.6 508,939.6 Z" fill="#fff" stroke="#b9c4f0" stroke-width="1.6"/><path d="M501.4,952.6 H514.6 A6.6,6.6 0 0 1 501.4,952.6 Z" fill="#b9c4f0"/><circle cx="572" cy="949.4" r="4" fill="#b9c4f0"/><circle cx="636" cy="949.4" r="4" fill="#b9c4f0"/><circle cx="700" cy="949.4" r="4" fill="#b9c4f0"/><circle cx="764" cy="949.4" r="4" fill="#b9c4f0"/><circle cx="828" cy="949.4" r="4" fill="#b9c4f0"/><circle cx="892" cy="949.4" r="4" fill="#b9c4f0"/><circle cx="956" cy="949.4" r="4" fill="#b9c4f0"/><circle cx="1020" cy="949.4" r="4" fill="#b9c4f0"/><circle cx="1084" cy="949.4" r="4" fill="#b9c4f0"/><circle cx="1148" cy="949.4" r="4" fill="#b9c4f0"/><polyline points="418,1083.4 444,1083.2 508,1082.7 572,1080.0 636,1080.0 700,1075.5 764,1071.0 828,1066.5 892,1066.5 956,1066.5 1020,1066.5 1084,1071.0 1148,1071.0 1194,1071.0" fill="none" stroke="#4d8b52" stroke-width="2" stroke-linejoin="round"/><g transform="rotate(0 444 1200.5)"><path d="M437.4,1199.5 L444,1193.3 L450.6,1199.5" fill="none" stroke="#98a1c6" stroke-width="2.2"/><path d="M437.4,1207.1 L444,1200.9 L450.6,1207.1" fill="none" stroke="#98a1c6" stroke-width="2.2"/></g><g transform="rotate(0 508 1200.5)"><path d="M501.4,1199.5 L508,1193.3 L514.6,1199.5" fill="none" stroke="#2b3a7a" stroke-width="2.2"/><path d="M501.4,1207.1 L508,1200.9 L514.6,1207.1" fill="none" stroke="#98a1c6" stroke-width="2.2"/></g><g transform="rotate(0 572 1200.5)"><path d="M565.4,1199.5 L572,1193.3 L578.6,1199.5" fill="none" stroke="#2b3a7a" stroke-width="2.2"/><path d="M565.4,1207.1 L572,1200.9 L578.6,1207.1" fill="none" stroke="#98a1c6" stroke-width="2.2"/></g><g transform="rotate(0 636 1200.5)"><path d="M629.4,1199.5 L636,1193.3 L642.6,1199.5" fill="none" stroke="#2b3a7a" stroke-width="2.2"/><path d="M629.4,1207.1 L636,1200.9 L642.6,1207.1" fill="none" stroke="#98a1c6" stroke-width="2.2"/></g><g transform="rotate(0 700 1200.5)"><path d="M693.4,1199.5 L700,1193.3 L706.6,1199.5" fill="none" stroke="#2b3a7a" stroke-width="2.2"/><path d="M693.4,1207.1 L700,1200.9 L706.6,1207.1" fill="none" stroke="#98a1c6" stroke-width="2.2"/></g><g transform="rotate(0 764 1200.5)"><path d="M757.4,1199.5 L764,1193.3 L770.6,1199.5" fill="none" stroke="#2b3a7a" stroke-width="2.2"/><path d="M757.4,1207.1 L764,1200.9 L770.6,1207.1" fill="none" stroke="#98a1c6" stroke-width="2.2"/></g><g transform="rotate(0 828 1200.5)"><path d="M821.4,1199.5 L828,1193.3 L834.6,1199.5" fill="none" stroke="#2b3a7a" stroke-width="2.2"/><path d="M821.4,1207.1 L828,1200.9 L834.6,1207.1" fill="none" stroke="#98a1c6" stroke-width="2.2"/></g><path d="M889.2,1195.7 H897.5 V1204.2" fill="none" stroke="#2b3a7a" stroke-width="2.2"/><path d="M882.4,1201.2 H891.2 V1209.8" fill="none" stroke="#98a1c6" stroke-width="2.2"/><path d="M953.2,1195.7 H961.5 V1204.2" fill="none" stroke="#2b3a7a" stroke-width="2.2"/><path d="M946.4,1201.2 H955.2 V1209.8" fill="none" stroke="#2b3a7a" stroke-width="2.2"/><path d="M1017.2,1195.7 H1025.5 V1204.2" fill="none" stroke="#2b3a7a" stroke-width="2.2"/><path d="M1010.4,1201.2 H1019.2 V1209.8" fill="none" stroke="#2b3a7a" stroke-width="2.2"/><path d="M1081.2,1195.7 H1089.5 V1204.2" fill="none" stroke="#2b3a7a" stroke-width="2.2"/><path d="M1074.4,1201.2 H1083.2 V1209.8" fill="none" stroke="#2b3a7a" stroke-width="2.2"/><path d="M1145.2,1195.7 H1153.5 V1204.2" fill="none" stroke="#2b3a7a" stroke-width="2.2"/><path d="M1138.4,1201.2 H1147.2 V1209.8" fill="none" stroke="#2b3a7a" stroke-width="2.2"/></svg>
<div style="left:0px;top:1287px;width:1593px;height:48px;background:#1e1e1e;"></div>
<span style="left:80.30px;top:9px;font-size:19.6px;color:#fff;letter-spacing:0.056px;-webkit-text-stroke:.45px #fff;">MetService</span>
<span style="left:80.50px;top:30px;font-size:6.3px;color:#fff;letter-spacing:1.125px;">TE RATONGA TIRORANGI</span>
<span style="left:211.50px;top:13px;font-size:14.6px;color:#fff;font-weight:700;letter-spacing:-0.054px;">National</span>
<span style="left:301.40px;top:13px;font-size:14.6px;color:#fff;font-weight:700;letter-spacing:-0.425px;">Towns &amp; Cities</span>
<span style="left:431.40px;top:13px;font-size:14.6px;color:#fff;font-weight:700;letter-spacing:-0.353px;">Rural</span>
<span style="left:499.70px;top:13px;font-size:14.6px;color:#fff;font-weight:700;letter-spacing:0.051px;">Marine</span>
<span style="left:579.60px;top:13px;font-size:14.6px;color:#fff;font-weight:700;letter-spacing:-0.248px;">Mountains &amp; Parks</span>
<span style="left:739.70px;top:13px;font-size:14.6px;color:#fff;font-weight:700;letter-spacing:-0.348px;">Maps &amp; Radar</span>
<span style="left:865.50px;top:13px;font-size:14.6px;color:#fff;font-weight:700;letter-spacing:-0.350px;">Warnings</span>
<span style="left:1510.00px;top:13px;font-size:14.6px;color:#fff;font-weight:700;letter-spacing:0.142px;">More</span>
<span style="left:74.80px;top:69px;font-size:17px;color:#2d2d2d;font-weight:700;letter-spacing:-0.234px;">Auckland Central - 48 Hours</span>
<span style="left:46.10px;top:123px;font-size:17px;color:#fff;font-weight:700;letter-spacing:-0.361px;">Next 48 Hours</span>
<span style="left:188.30px;top:124px;font-size:16.6px;color:#dde5f3;font-weight:700;letter-spacing:-0.643px;">7 Days</span>
<span style="left:271.30px;top:124px;font-size:16.6px;color:#dde5f3;font-weight:700;letter-spacing:-0.372px;">Extended</span>
<span style="left:375.00px;top:124px;font-size:16.6px;color:#dde5f3;font-weight:700;letter-spacing:-0.118px;">Water Activities</span>
<span style="left:528.60px;top:124px;font-size:16.6px;color:#dde5f3;font-weight:700;letter-spacing:-0.339px;">Nearby Forecasts</span>
<span style="left:695.50px;top:124px;font-size:16.6px;color:#dde5f3;font-weight:700;letter-spacing:-0.213px;">Past Weather</span>
<span style="left:46.00px;top:194px;font-size:15px;color:#555;font-weight:700;letter-spacing:-0.198px;">No warnings in place for Auckland</span>
<span style="left:1384.00px;top:194px;font-size:15px;color:#555;font-weight:700;letter-spacing:-0.061px;">View all severe weather</span>
<span style="left:38.60px;top:265px;font-size:17px;color:#182346;font-weight:700;letter-spacing:-0.199px;">Current Conditions</span>
<span style="left:38.60px;top:322px;font-size:26px;color:#182346;font-weight:700;letter-spacing:0.096px;">13.6°</span>
<span style="left:38.60px;top:356px;font-size:16px;color:#2e3247;letter-spacing:-0.017px;">Feels like 13°</span>
<span style="left:357.00px;top:324px;font-size:16px;color:#2e3247;letter-spacing:-0.102px;">18°</span>
<span style="left:357.00px;top:353px;font-size:16px;color:#2e3247;letter-spacing:-0.102px;">14°</span>
<span style="left:70.30px;top:419px;font-size:15px;color:#343a52;letter-spacing:-0.150px;">Clothing</span>
<span style="left:334.00px;top:409px;font-size:15px;color:#262a3c;letter-spacing:-0.033px;">2 layers</span>
<span style="left:304.70px;top:429px;font-size:15px;color:#262a3c;letter-spacing:0.404px;">0 windproof</span>
<span style="left:70.30px;top:463px;font-size:15px;color:#343a52;letter-spacing:-0.496px;">Wind</span>
<span style="left:253.70px;top:453px;font-size:15px;color:#262a3c;letter-spacing:0.106px;">Moderate 17km/h S</span>
<span style="left:293.00px;top:473px;font-size:15px;color:#262a3c;letter-spacing:0.068px;">Gusts 20km/h</span>
<span style="left:70.30px;top:507px;font-size:15px;color:#343a52;letter-spacing:-0.094px;">Harbour Bridge</span>
<span style="left:242.90px;top:497px;font-size:15px;color:#262a3c;letter-spacing:0.043px;">Light winds 13km/h S</span>
<span style="left:293.00px;top:517px;font-size:15px;color:#262a3c;letter-spacing:0.068px;">Gusts 28km/h</span>
<span style="left:70.30px;top:551px;font-size:15px;color:#343a52;letter-spacing:-0.362px;">Rainfall</span>
<span style="left:339.80px;top:551px;font-size:15px;color:#262a3c;letter-spacing:0.164px;">0.2mm</span>
<span style="left:70.30px;top:595px;font-size:15px;color:#343a52;letter-spacing:0.092px;">Humidity</span>
<span style="left:358.30px;top:595px;font-size:15px;color:#262a3c;letter-spacing:-1.016px;">95%</span>
<span style="left:70.30px;top:639px;font-size:15px;color:#343a52;letter-spacing:-0.362px;">Pressure</span>
<span style="left:329.50px;top:629px;font-size:15px;color:#262a3c;letter-spacing:-0.544px;">1001hPa</span>
<span style="left:346.60px;top:649px;font-size:15px;color:#262a3c;letter-spacing:-0.397px;">Rising</span>
<span style="left:134.80px;top:690px;font-size:12px;color:#555;letter-spacing:0.190px;">Observations by MetService</span>
<span style="left:133.60px;top:777px;font-size:17px;color:#182346;font-weight:700;letter-spacing:-0.317px;">Auckland Rain Radar</span>
<span style="left:38.80px;top:867px;font-size:17px;color:#182346;font-weight:700;letter-spacing:-0.344px;">Paddleboarding Top Spot</span>
<span style="left:70.80px;top:922px;font-size:12.4px;color:#182346;font-weight:700;letter-spacing:0.110px;">MISSION BAY</span>
<span style="left:70.80px;top:939px;font-size:15px;color:#b0682a;letter-spacing:0.146px;-webkit-text-stroke:.3px #b0682a;">Today's risk: Moderate or higher</span>
<span style="left:70.80px;top:959px;font-size:15px;color:#5f8a22;letter-spacing:-0.015px;-webkit-text-stroke:.3px #5f8a22;">Next good day: Thursday</span>
<span style="left:99.40px;top:1013px;font-size:14.5px;color:#7d9cf8;font-weight:700;letter-spacing:-0.033px;">See all paddleboarding locations</span>
<span style="left:38.80px;top:1081px;font-size:17px;color:#182346;font-weight:700;letter-spacing:-0.340px;">Pollen, Laundry &amp; UV</span>
<span style="left:70.80px;top:1144px;font-size:12.4px;color:#182346;font-weight:700;letter-spacing:-0.453px;">POLLEN FORECAST</span>
<span style="left:70.80px;top:1167px;font-size:15px;color:#222;letter-spacing:-0.216px;-webkit-text-stroke:.35px #222;">Low</span>
<span style="left:70.80px;top:1187px;font-size:15px;color:#2e3247;letter-spacing:-0.162px;">Type is allergenic pollen minimal, fungal spores</span>
<span style="left:70.80px;top:1207px;font-size:15px;color:#2e3247;letter-spacing:-0.174px;">still present causing hayfever</span>
<span style="left:70.80px;top:1244px;font-size:12.4px;color:#182346;font-weight:700;letter-spacing:0.127px;">LAUNDRY DRYING TIME</span>
<span style="left:70.80px;top:1266px;font-size:15px;color:#d9363e;letter-spacing:-0.034px;-webkit-text-stroke:.3px #d9363e;">Wet all day</span>
<span style="left:1226.40px;top:265px;font-size:17px;color:#182346;font-weight:700;letter-spacing:-0.247px;">PlaceMakers Tradie Forecasts</span>
<span style="left:1258.50px;top:320px;font-size:12.4px;color:#182346;font-weight:700;letter-spacing:-0.647px;">CONCRETE</span>
<span style="left:1258.50px;top:343px;font-size:15px;color:#b8751a;letter-spacing:-0.672px;-webkit-text-stroke:.3px #b8751a;">Ok</span>
<span style="left:1258.50px;top:363px;font-size:15px;color:#2e3247;letter-spacing:-0.166px;">Some rain in the daytime, be ready to cover</span>
<span style="left:1258.50px;top:383px;font-size:15px;color:#2e3247;letter-spacing:-0.224px;">concrete if necessary.</span>
<span style="left:1258.50px;top:410px;font-size:12.4px;color:#182346;font-weight:700;letter-spacing:0.029px;">FRAMING</span>
<span style="left:1258.50px;top:433px;font-size:15px;color:#d9363e;letter-spacing:-0.296px;-webkit-text-stroke:.3px #d9363e;">Poor</span>
<span style="left:1258.50px;top:453px;font-size:15px;color:#2e3247;letter-spacing:-0.155px;">Raining today, take extra care when handling</span>
<span style="left:1258.50px;top:473px;font-size:15px;color:#2e3247;letter-spacing:-0.167px;">frames or trusses.</span>
<span style="left:1258.50px;top:500px;font-size:12.4px;color:#182346;font-weight:700;letter-spacing:-0.188px;">LANDSCAPING</span>
<span style="left:1258.50px;top:523px;font-size:15px;color:#d9363e;letter-spacing:-0.296px;-webkit-text-stroke:.3px #d9363e;">Poor</span>
<span style="left:1258.50px;top:543px;font-size:15px;color:#2e3247;letter-spacing:-0.182px;">Lots of rain recently – take care when moving</span>
<span style="left:1258.50px;top:563px;font-size:15px;color:#2e3247;letter-spacing:-0.322px;">soil.</span>
<span style="left:1226.40px;top:597px;font-size:13px;color:#555;letter-spacing:-0.179px;">Every product to get the job done</span>
<span style="left:474.60px;top:265px;font-size:12.6px;color:#182346;font-weight:700;">TODAY</span>
<span style="left:474.60px;top:282px;font-size:13px;color:#2e3247;letter-spacing:-0.376px;">23 MAY</span>
<span style="left:592.20px;top:277px;font-size:14px;color:#2e3247;letter-spacing:-0.086px;">18°</span>
<span style="left:654.20px;top:277px;font-size:14px;color:#2e3247;letter-spacing:0.114px;">14°</span>
<span style="left:437.45px;top:332px;font-size:13px;color:#23273a;letter-spacing:0.116px;">Overnight</span>
<span style="left:538.35px;top:332px;font-size:13px;color:#23273a;letter-spacing:0.172px;">Morning</span>
<span style="left:629.30px;top:332px;font-size:13px;color:#23273a;letter-spacing:0.278px;">Afternoon</span>
<span style="left:732.50px;top:332px;font-size:13px;color:#23273a;letter-spacing:-0.381px;">Evening</span>
<span style="left:865.60px;top:265px;font-size:12.6px;color:#182346;font-weight:700;letter-spacing:-0.895px;">WED</span>
<span style="left:865.60px;top:282px;font-size:13px;color:#2e3247;letter-spacing:-0.256px;">24 MAY</span>
<span style="left:983.20px;top:277px;font-size:14px;color:#2e3247;letter-spacing:-0.086px;">18°</span>
<span style="left:1045.20px;top:277px;font-size:14px;color:#2e3247;letter-spacing:-0.091px;">8°</span>
<span style="left:828.45px;top:332px;font-size:13px;color:#23273a;letter-spacing:0.116px;">Overnight</span>
<span style="left:929.35px;top:332px;font-size:13px;color:#23273a;letter-spacing:0.172px;">Morning</span>
<span style="left:1020.30px;top:332px;font-size:13px;color:#23273a;letter-spacing:0.278px;">Afternoon</span>
<span style="left:1123.50px;top:332px;font-size:13px;color:#23273a;letter-spacing:-0.381px;">Evening</span>
<span style="left:434.40px;top:421px;font-size:17px;color:#182346;font-weight:700;letter-spacing:-0.278px;">Today</span>
<span style="left:486.60px;top:421px;font-size:17px;color:#2e3247;letter-spacing:-0.490px;">23 May</span>
<span style="left:923.60px;top:424px;font-size:12.4px;color:#182346;font-weight:700;letter-spacing:-0.466px;">SUNRISE</span>
<span style="left:981.40px;top:422px;font-size:14.5px;color:#2e3247;letter-spacing:-0.235px;">7:17am</span>
<span style="left:1077.40px;top:424px;font-size:12.4px;color:#182346;font-weight:700;letter-spacing:-0.613px;">SUNSET</span>
<span style="left:1129.60px;top:422px;font-size:14.5px;color:#2e3247;letter-spacing:-0.075px;">5:18pm</span>
<span style="left:434.40px;top:477px;font-size:17px;color:#2e3247;letter-spacing:-0.136px;">Showers, some possibly heavy this morning, becoming isolated this evening and fine breaks</span>
<span style="left:434.40px;top:499px;font-size:17px;color:#2e3247;letter-spacing:-0.084px;">increasing. Southwesterlies picking up this morning.</span>
<span style="left:434.40px;top:529px;font-size:12.5px;color:#555;letter-spacing:-0.097px;">Issued: 7:11am Tue 23 May</span>
<span style="left:466.50px;top:580px;font-size:12.4px;color:#182346;font-weight:700;letter-spacing:-0.480px;">FIRE SEASON</span>
<span style="left:466.50px;top:600px;font-size:15px;color:#5f8a22;letter-spacing:-0.334px;-webkit-text-stroke:.35px #5f8a22;">Open</span>
<span style="left:466.50px;top:621px;font-size:15px;color:#2e3247;letter-spacing:-0.050px;">Other than public conservation land, permits are</span>
<span style="left:466.50px;top:641px;font-size:15px;color:#2e3247;letter-spacing:0.084px;">not required today.</span>
<span style="left:846.50px;top:580px;font-size:12.4px;color:#182346;font-weight:700;letter-spacing:-0.297px;">FIRE DANGER</span>
<span style="left:846.50px;top:600px;font-size:15px;color:#222;letter-spacing:-0.216px;-webkit-text-stroke:.35px #222;">Low</span>
<span style="left:846.50px;top:621px;font-size:15px;color:#2e3247;letter-spacing:-0.107px;">You should be able to manage the risks of wildfire</span>
<span style="left:846.50px;top:641px;font-size:15px;color:#2e3247;letter-spacing:-0.020px;">now.</span>
<span style="left:434.40px;top:677px;font-size:13px;color:#555;letter-spacing:-0.192px;">Data provided by</span>
<span style="left:460.30px;top:719px;font-size:13px;color:#7a7a7a;font-weight:700;letter-spacing:0.060px;">Information</span>
<span style="left:434.40px;top:793px;font-size:17px;color:#111;font-weight:700;letter-spacing:-0.224px;">Hourly Observations and Forecast</span>
<span style="left:438.10px;top:838px;font-size:12.4px;color:#fff;font-weight:700;letter-spacing:0.205px;">TUE 23 MAY</span>
<span style="left:431.35px;top:867px;font-size:12.4px;color:#cfcfcf;font-weight:700;letter-spacing:0.244px;">7am</span>
<span style="left:440.10px;top:971px;font-size:14px;color:#333;">0</span>
<span style="left:425.40px;top:1062px;font-size:15px;color:#333;">13.3°</span>
<span style="left:439.49px;top:1168px;font-size:13.5px;color:#333;">S</span>
<span style="left:436.48px;top:1226px;font-size:13.5px;color:#333;">13</span>
<span style="left:495.40px;top:867px;font-size:12.4px;color:#cfcfcf;font-weight:700;letter-spacing:0.194px;">8am</span>
<span style="left:498.27px;top:971px;font-size:14px;color:#333;">0.2</span>
<span style="left:489.40px;top:1061px;font-size:15px;color:#333;">13.4°</span>
<span style="left:503.49px;top:1168px;font-size:13.5px;color:#333;">S</span>
<span style="left:500.48px;top:1226px;font-size:13.5px;color:#333;">15</span>
<span style="left:559.45px;top:867px;font-size:12.4px;color:#1c2138;font-weight:700;letter-spacing:0.144px;">9am</span>
<span style="left:568.10px;top:971px;font-size:14px;color:#333;">0</span>
<span style="left:559.66px;top:1059px;font-size:15px;color:#333;">14°</span>
<span style="left:567.49px;top:1168px;font-size:13.5px;color:#333;">S</span>
<span style="left:564.48px;top:1226px;font-size:13.5px;color:#333;">17</span>
<span style="left:620.30px;top:867px;font-size:12.4px;color:#1c2138;font-weight:700;letter-spacing:-0.101px;">10am</span>
<span style="left:632.10px;top:971px;font-size:14px;color:#333;">0</span>
<span style="left:623.66px;top:1059px;font-size:15px;color:#333;">14°</span>
<span style="left:631.49px;top:1168px;font-size:13.5px;color:#333;">S</span>
<span style="left:628.48px;top:1226px;font-size:13.5px;color:#333;">18</span>
<span style="left:684.20px;top:867px;font-size:12.4px;color:#1c2138;font-weight:700;letter-spacing:0.195px;">11am</span>
<span style="left:696.10px;top:971px;font-size:14px;color:#333;">0</span>
<span style="left:687.66px;top:1054px;font-size:15px;color:#333;">15°</span>
<span style="left:695.49px;top:1168px;font-size:13.5px;color:#333;">S</span>
<span style="left:692.48px;top:1226px;font-size:13.5px;color:#333;">19</span>
<span style="left:748.00px;top:867px;font-size:12.4px;color:#1c2138;font-weight:700;letter-spacing:-0.125px;">12pm</span>
<span style="left:760.10px;top:971px;font-size:14px;color:#333;">0</span>
<span style="left:751.66px;top:1050px;font-size:15px;color:#333;">16°</span>
<span style="left:759.49px;top:1168px;font-size:13.5px;color:#333;">S</span>
<span style="left:756.48px;top:1226px;font-size:13.5px;color:#333;">23</span>
<span style="left:815.40px;top:867px;font-size:12.4px;color:#1c2138;font-weight:700;letter-spacing:-0.142px;">1pm</span>
<span style="left:824.10px;top:971px;font-size:14px;color:#333;">0</span>
<span style="left:815.66px;top:1045px;font-size:15px;color:#333;">17°</span>
<span style="left:823.49px;top:1168px;font-size:13.5px;color:#333;">S</span>
<span style="left:820.48px;top:1226px;font-size:13.5px;color:#333;">25</span>
<span style="left:879.30px;top:867px;font-size:12.4px;color:#1c2138;font-weight:700;letter-spacing:-0.042px;">2pm</span>
<span style="left:888.10px;top:971px;font-size:14px;color:#333;">0</span>
<span style="left:879.66px;top:1045px;font-size:15px;color:#333;">17°</span>
<span style="left:881.12px;top:1168px;font-size:13.5px;color:#333;">SW</span>
<span style="left:884.48px;top:1226px;font-size:13.5px;color:#333;">28</span>
<span style="left:943.30px;top:867px;font-size:12.4px;color:#1c2138;font-weight:700;letter-spacing:-0.042px;">3pm</span>
<span style="left:952.10px;top:971px;font-size:14px;color:#333;">0</span>
<span style="left:943.66px;top:1045px;font-size:15px;color:#333;">17°</span>
<span style="left:945.12px;top:1168px;font-size:13.5px;color:#333;">SW</span>
<span style="left:948.48px;top:1226px;font-size:13.5px;color:#333;">30</span>
<span style="left:1007.20px;top:867px;font-size:12.4px;color:#1c2138;font-weight:700;letter-spacing:0.058px;">4pm</span>
<span style="left:1016.10px;top:971px;font-size:14px;color:#333;">0</span>
<span style="left:1007.66px;top:1045px;font-size:15px;color:#333;">17°</span>
<span style="left:1009.12px;top:1168px;font-size:13.5px;color:#333;">SW</span>
<span style="left:1012.48px;top:1226px;font-size:13.5px;color:#333;">31</span>
<span style="left:1071.30px;top:867px;font-size:12.4px;color:#1c2138;font-weight:700;letter-spacing:-0.042px;">5pm</span>
<span style="left:1080.10px;top:971px;font-size:14px;color:#333;">0</span>
<span style="left:1071.66px;top:1050px;font-size:15px;color:#333;">16°</span>
<span style="left:1073.12px;top:1168px;font-size:13.5px;color:#333;">SW</span>
<span style="left:1076.48px;top:1226px;font-size:13.5px;color:#333;">30</span>
<span style="left:1135.30px;top:867px;font-size:12.4px;color:#1c2138;font-weight:700;letter-spacing:-0.042px;">6pm</span>
<span style="left:1144.10px;top:971px;font-size:14px;color:#333;">0</span>
<span style="left:1135.66px;top:1050px;font-size:15px;color:#333;">16°</span>
<span style="left:1137.12px;top:1168px;font-size:13.5px;color:#333;">SW</span>
<span style="left:1140.48px;top:1226px;font-size:13.5px;color:#333;">30</span>
<span style="left:434.40px;top:901px;font-size:13px;color:#222;font-weight:700;letter-spacing:0.364px;">Rainfall (mm/h)</span>
<span style="left:434.40px;top:1008px;font-size:13px;color:#222;font-weight:700;letter-spacing:0.223px;">Temperature (°C)</span>
<span style="left:434.40px;top:1131px;font-size:13px;color:#222;font-weight:700;letter-spacing:0.119px;">Avg wind speed (not gusts) in km/h</span>
<span style="left:434.40px;top:1270px;font-size:12px;color:#333;letter-spacing:0.138px;">Observed</span>
<span style="left:562.50px;top:1270px;font-size:12px;color:#333;letter-spacing:0.073px;">Forecast</span>
</div>
</body></html>
